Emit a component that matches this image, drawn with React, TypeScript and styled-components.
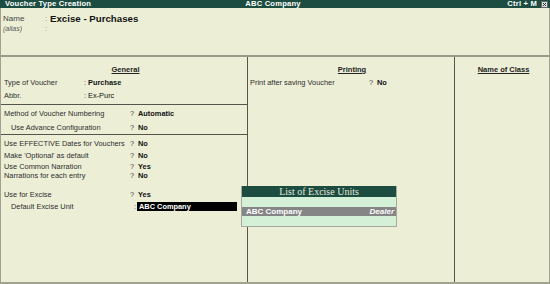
import React from 'react';
import styled, { createGlobalStyle } from 'styled-components';

const colors = {
  bg: '#ecefd6',
  bar: '#1d4c40',
  line: '#55554c',
  frame: '#a2a290',
  text: '#2c2c2c',
  popup: '#d4f0d6',
  pick: '#858585',
};

const GlobalStyle = createGlobalStyle`
  html, body {
    margin: 0;
    padding: 0;
    background: ${colors.bg};
  }
  * {
    box-sizing: border-box;
  }
`;

const sans = `"Liberation Sans", Arial, sans-serif`;

type Row = {
  label: string;
  value?: string;
  mark?: ':' | '?';
  h: number;
  indent?: boolean;
  bold?: boolean;
};

const typeRows: Row[] = [
  { label: 'Type of Voucher', value: 'Purchase', mark: ':', h: 13, bold: true },
  { label: 'Abbr.', value: 'Ex-Purc', mark: ':', h: 13 },
];

const numberingRows: Row[] = [
  { label: 'Method of Voucher Numbering', value: 'Automatic', mark: '?', h: 13, bold: true },
  { label: 'Use Advance Configuration', value: 'No', mark: '?', h: 14, indent: true, bold: true },
];

const optionRows: Row[] = [
  { label: 'Use EFFECTIVE Dates for Vouchers', value: 'No', mark: '?', h: 12, bold: true },
  { label: "Make 'Optional' as default", value: 'No', mark: '?', h: 12, bold: true },
  { label: 'Use Common Narration', value: 'Yes', mark: '?', h: 10, bold: true },
  { label: 'Narrations for each entry', value: 'No', mark: '?', h: 9, bold: true },
];

const FieldRow: React.FC<{ row: Row; labelWidth: number }> = ({ row, labelWidth }) => (
  <Line $h={row.h} $indent={row.indent}>
    <Label $w={labelWidth - (row.indent ? 7 : 0)}>{row.label}</Label>
    <Mark $w={row.mark === ':' ? 4 : 8}>{row.mark}</Mark>
    <Value $bold={row.bold}>{row.value}</Value>
  </Line>
);

export default function App() {
  return (
    <>
      <GlobalStyle />
      <Window>
        <TitleBar>
          <TitleLeft>Voucher Type Creation</TitleLeft>
          <TitleCenter>ABC Company</TitleCenter>
          <TitleRight>Ctrl + M</TitleRight>
          <CloseBox>
            <svg width="7" height="7" viewBox="0 0 7 7">
              <rect x="0.5" y="0.5" width="6" height="6" fill="#dcdcdc" stroke="#666" strokeWidth="1" />
              <path d="M2 2 L5 5 M5 2 L2 5" stroke="#333" strokeWidth="1" />
            </svg>
          </CloseBox>
        </TitleBar>

        <Frame>
          <Header>
            <NameRow>
              <NameLabel>Name</NameLabel>
              <NameColon>:</NameColon>
              <NameValue>Excise - Purchases</NameValue>
            </NameRow>
            <AliasRow>
              <AliasLabel>(alias)</AliasLabel>
              <AliasColon>:</AliasColon>
            </AliasRow>
          </Header>

          <Columns>
            <Column $w={247}>
              <Section $top={7} $bottom={2} $rule>
                <Heading>General</Heading>
                {typeRows.map((r) => (
                  <FieldRow key={r.label} row={r} labelWidth={80} />
                ))}
              </Section>
              <Section $top={2} $rule>
                {numberingRows.map((r) => (
                  <FieldRow key={r.label} row={r} labelWidth={126} />
                ))}
              </Section>
              <Section $top={2}>
                {optionRows.map((r) => (
                  <FieldRow key={r.label} row={r} labelWidth={126} />
                ))}
                <Spacer />
                <FieldRow
                  row={{ label: 'Use for Excise', value: 'Yes', mark: '?', h: 12, bold: true }}
                  labelWidth={126}
                />
                <Line $h={12} $indent>
                  <Label $w={123}>Default Excise Unit</Label>
                  <Mark $w={3}>:</Mark>
                  <InputBox>ABC Company</InputBox>
                </Line>
              </Section>
            </Column>

            <Column $w={207}>
              <Section $top={7} $side={2}>
                <Heading>Printing</Heading>
                <FieldRow
                  row={{ label: 'Print after saving Voucher', value: 'No', mark: '?', h: 13, bold: true }}
                  labelWidth={119}
                />
              </Section>
            </Column>

            <Column>
              <Section $top={7}>
                <Heading>Name of Class</Heading>
              </Section>
            </Column>
          </Columns>
        </Frame>

        <Popup>
          <PopupTitle>List of Excise Units</PopupTitle>
          <PopupBlank />
          <PopupItem>
            <span>ABC Company</span>
            <ItemTag>Dealer</ItemTag>
          </PopupItem>
          <PopupBlank />
        </Popup>
      </Window>
    </>
  );
}

const Window = styled.div`
  position: relative;
  width: 550px;
  height: 284px;
  display: flex;
  flex-direction: column;
  background: ${colors.bg};
  font-family: ${sans};
  color: ${colors.text};
`;

const TitleBar = styled.div`
  height: 8px;
  display: flex;
  align-items: center;
  background: ${colors.bar};
  color: #ffffff;
  font-weight: bold;
  font-size: 7.6px;
  line-height: 8px;
  letter-spacing: 0.2px;
  padding-left: 5px;
`;

const TitleLeft = styled.div`
  flex: 1;
`;

const TitleCenter = styled.div`
  flex: 1;
  text-align: center;
  transform: translateX(2px);
`;

const TitleRight = styled.div`
  flex: 1;
  text-align: right;
  padding-right: 4px;
`;

const CloseBox = styled.div`
  width: 8px;
  height: 8px;
  display: flex;
  align-items: center;
  justify-content: center;
  margin-right: 1px;
`;

const Frame = styled.div`
  flex: 1;
  display: flex;
  flex-direction: column;
  border-left: 1px solid ${colors.frame};
  border-right: 1px solid ${colors.frame};
  border-bottom: 2px solid ${colors.frame};
`;

const Header = styled.div`
  height: 49px;
  padding: 4px 0 0 2px;
  border-bottom: 2px solid #9a9a8a;
`;

const NameRow = styled.div`
  display: flex;
  align-items: center;
  height: 12px;
`;

const NameLabel = styled.div`
  width: 42px;
  font-size: 8px;
  color: #444;
`;

const NameColon = styled.div`
  width: 5px;
  font-size: 8px;
  color: #888;
`;

const NameValue = styled.div`
  font-size: 9.7px;
  font-weight: bold;
  color: #111;
`;

const AliasRow = styled.div`
  display: flex;
  align-items: center;
  height: 8px;
`;

const AliasLabel = styled.div`
  width: 42px;
  font-size: 7px;
  font-style: italic;
  color: #555;
`;

const AliasColon = styled.div`
  font-size: 7px;
  color: #888;
`;

const Columns = styled.div`
  flex: 1;
  display: flex;
`;

const Column = styled.div<{ $w?: number }>`
  ${(p) => (p.$w ? `width: ${p.$w}px; border-right: 1px solid ${colors.line};` : 'flex: 1;')}
  display: flex;
  flex-direction: column;
`;

const Section = styled.div<{ $top?: number; $bottom?: number; $rule?: boolean; $side?: number }>`
  padding: ${(p) => p.$top ?? 0}px 0 ${(p) => p.$bottom ?? 0}px ${(p) => p.$side ?? 3}px;
  border-bottom: ${(p) => (p.$rule ? `1px solid ${colors.line}` : 'none')};
`;

const Heading = styled.div`
  height: 12px;
  line-height: 12px;
  text-align: center;
  font-size: 7.5px;
  font-weight: bold;
  text-decoration: underline;
  color: #222;
`;

const Line = styled.div<{ $h: number; $indent?: boolean }>`
  height: ${(p) => p.$h}px;
  display: flex;
  align-items: center;
  padding-left: ${(p) => (p.$indent ? 7 : 0)}px;
  font-size: 7.4px;
  white-space: nowrap;
`;

const Label = styled.div<{ $w: number }>`
  width: ${(p) => p.$w}px;
  color: ${colors.text};
`;

const Mark = styled.div<{ $w: number }>`
  width: ${(p) => p.$w}px;
  color: #444;
`;

const Value = styled.div<{ $bold?: boolean }>`
  font-weight: ${(p) => (p.$bold ? 'bold' : 'normal')};
  color: #111;
`;

const Spacer = styled.div`
  height: 8px;
`;

const InputBox = styled.div`
  width: 100px;
  height: 9px;
  line-height: 9px;
  background: #000;
  color: #fff;
  font-weight: bold;
  padding-left: 2px;
`;

const Popup = styled.div`
  position: absolute;
  left: 241px;
  top: 186px;
  width: 156px;
  display: flex;
  flex-direction: column;
  background: ${colors.popup};
  border: 1px solid #a8a8a0;
  border-top: none;
`;

const PopupTitle = styled.div`
  height: 11px;
  line-height: 11px;
  background: ${colors.bar};
  color: #e4e8dc;
  text-align: center;
  font-family: "Liberation Serif", "Times New Roman", serif;
  font-size: 10px;
`;

const PopupBlank = styled.div`
  height: 10px;
`;

const PopupItem = styled.div`
  height: 9px;
  display: flex;
  align-items: center;
  justify-content: space-between;
  padding: 0 2px 0 4px;
  background: ${colors.pick};
  color: #fff;
  font-size: 8px;
  font-weight: bold;
`;

const ItemTag = styled.span`
  font-style: italic;
`;
